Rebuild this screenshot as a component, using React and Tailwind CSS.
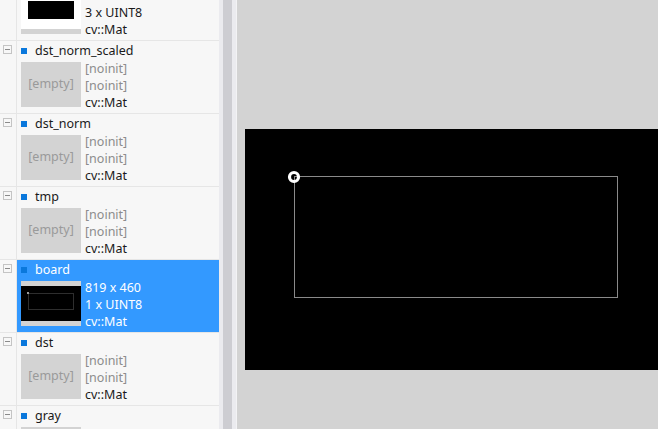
import React from "react";

const items = [
  { name: "dst_scaled", lines: ["819 x 460", "3 x UINT8", "cv::Mat"], thumb: "white" },
  { name: "dst_norm_scaled", lines: ["[noinit]", "[noinit]", "cv::Mat"], thumb: "empty" },
  { name: "dst_norm", lines: ["[noinit]", "[noinit]", "cv::Mat"], thumb: "empty" },
  { name: "tmp", lines: ["[noinit]", "[noinit]", "cv::Mat"], thumb: "empty" },
  { name: "board", lines: ["819 x 460", "1 x UINT8", "cv::Mat"], thumb: "board", selected: true },
  { name: "dst", lines: ["[noinit]", "[noinit]", "cv::Mat"], thumb: "empty" },
  { name: "gray", lines: ["819 x 460", "1 x UINT8", "cv::Mat"], thumb: "white" },
];

function Thumb({ kind }) {
  if (kind === "empty") {
    return (
      <div className="w-[60px] h-[45px] bg-[#d3d3d3] flex items-center justify-center text-[#9a9a9a] shrink-0">
        [empty]
      </div>
    );
  }
  const dark = kind === "board";
  return (
    <div className="w-[60px] h-[45px] bg-[#d3d3d3] flex flex-col justify-center shrink-0">
      <div className={`h-[35px] relative ${dark ? "bg-black" : "bg-white"}`}>
        {dark ? (
          <>
            <div className="absolute left-[7px] top-[7px] w-[46px] h-[17px] border border-[#2e2e2e]" />
            <div className="absolute left-[6px] top-[6px] w-[2px] h-[2px] bg-[#9a9a9a]" />
          </>
        ) : (
          <div className="absolute left-[7px] top-[7px] w-[46px] h-[18px] bg-black" />
        )}
      </div>
    </div>
  );
}

function Item({ item }) {
  const sel = item.selected;
  return (
    <div className="flex h-[73px] border-b border-[#e6e6e6]">
      <div className="w-[17px] shrink-0 border-r border-[#e6e6e6] pl-[3px] pt-[4px]">
        <div className="w-[9px] h-[9px] border border-[#c4c4c4] bg-[#f7f7f7] flex items-center justify-center">
          <div className="w-[5px] h-[1px] bg-[#8a8a8a]" />
        </div>
      </div>
      <div className={`flex-1 flex flex-col pl-[4px] ${sel ? "bg-[#3399ff] text-white" : ""}`}>
        <div className="h-[18px] pt-[2px] flex items-center gap-[8px]">
          <div className="w-[6px] h-[6px] bg-[#0a78dc]" />
          <span className={sel ? "text-white" : "text-[#1a1a1a]"}>{item.name}</span>
        </div>
        <div className="flex items-center gap-[4px] h-[51px]">
          <Thumb kind={item.thumb} />
          <div className="flex flex-col leading-[17px] pt-[1px]">
            {item.lines.map((l, i) => (
              <span
                key={i}
                className={sel ? "text-white" : l === "[noinit]" ? "text-[#8c8c8c]" : "text-[#1a1a1a]"}
              >
                {l}
              </span>
            ))}
          </div>
        </div>
      </div>
    </div>
  );
}

export default function App() {
  return (
    <div
      className="flex w-[658px] h-[429px] overflow-hidden text-[12.5px]"
      style={{ fontFamily: '"Noto Sans", "Open Sans", sans-serif' }}
    >
      <div className="w-[219px] shrink-0 bg-[#f7f7f7] overflow-hidden">
        <div className="mt-[-32px]">
          {items.map((it) => (
            <Item key={it.name} item={it} />
          ))}
        </div>
      </div>
      <div className="w-[17px] shrink-0 bg-[#ebebef] px-[4px]">
        <div className="w-[9px] h-full bg-[#cdcdd2]" />
      </div>
      <div className="w-[1px] shrink-0 bg-[#f3f3f5]" />
      <div className="flex-1 bg-[#d3d3d3] pl-[8px] pt-[129px]">
        <div className="w-[413px] h-[241px] bg-black">
          <svg width="413" height="241" viewBox="0 0 413 241">
            <rect x="49.5" y="47.5" width="323" height="121" fill="none" stroke="#8a8a8a" strokeWidth="1" />
            <circle cx="49" cy="48" r="4.5" fill="none" stroke="#ffffff" strokeWidth="3.2" />
          </svg>
        </div>
      </div>
    </div>
  );
}
